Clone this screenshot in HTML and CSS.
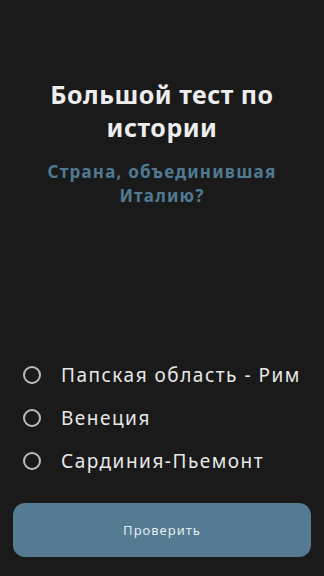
FILE: index.html
```html
<!DOCTYPE html>
<html>

<head>
    <title>Большой тест по истории</title>
    <meta http-equiv="Content-Type" content="text/html; charset=UTF-8">
    <meta name="viewport" content="width=device-width, initial-scale=1.0">
    <link rel="stylesheet" href="styles.css">
</head>

<body>
    <div class='quiz'>
        <div class='quiz-head'>
            <h1>Большой тест по истории</h1>
            <h2>Страна, объединившая Италию?</h2>
        </div>
        <div class='answers'>
            <label class='answer'><input type='radio' name='q1'><span class='dot'></span>Папская область - Рим</label>
            <label class='answer'><input type='radio' name='q1'><span class='dot'></span>Венеция</label>
            <label class='answer'><input type='radio' name='q1'><span class='dot'></span>Сардиния-Пьемонт</label>
        </div>
        <div class='check-btn'>
            <input type='button' value='Проверить'>
        </div>
    </div>
</body>

</html>
```

FILE: styles.css
```css
html,
body
{
    margin: 0;
    width: 100%;
    height: 100%;
    font-family: "Noto Sans", "Open Sans", sans-serif;
}

body
{
    color: #ececec;
    background-color: #1a1a1a;
    overflow: hidden;
}

.quiz
{
    height: 100%;
    display: flex;
    flex-direction: column;
    box-sizing: border-box;
    padding: 0 13px 19px 13px;
}

.quiz-head
{
    text-align: center;
    padding-top: 78px;
}

.quiz-head h1
{
    margin: 0 auto;
    width: 260px;
    font-size: 25px;
    line-height: 33px;
    font-weight: 700;
    letter-spacing: 0.5px;
    color: #ededed;
}

.quiz-head h2
{
    margin: 16px auto 0 auto;
    width: 260px;
    font-size: 17px;
    line-height: 24px;
    font-weight: 700;
    letter-spacing: 1.2px;
    color: #4f7a92;
}

.answers
{
    margin-top: auto;
    display: flex;
    flex-direction: column;
    gap: 10px;
    padding-left: 10px;
}

.answer
{
    display: flex;
    align-items: center;
    height: 33px;
    font-size: 19px;
    letter-spacing: 1.5px;
    color: #e8e8e8;
}

.answer input
{
    display: none;
}

.answer .dot
{
    width: 14px;
    height: 14px;
    border: 2px solid #bdbdbd;
    border-radius: 50%;
    margin-right: 20px;
}

.check-btn
{
    margin-top: 26px;
}

.check-btn input[type=button]
{
    width: 100%;
    height: 54px;
    border: none;
    border-radius: 12px;
    background-color: #547b92;
    color: #e3ecf1;
    font-family: "Noto Sans", sans-serif;
    font-size: 13px;
    letter-spacing: 1px;
    -webkit-appearance: none;
}
```
